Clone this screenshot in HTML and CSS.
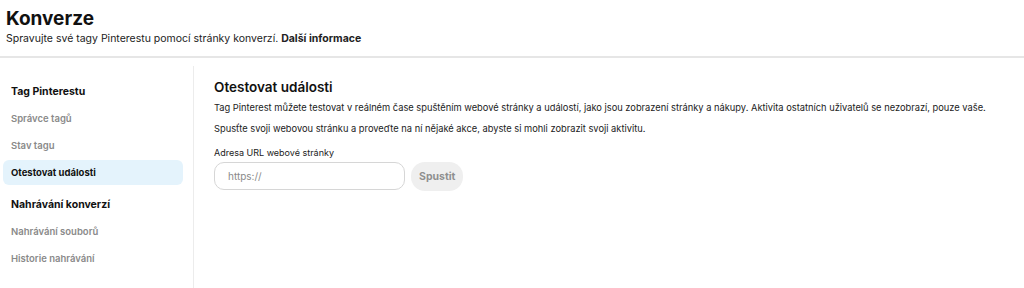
FILE: index.html
```html
<!DOCTYPE html>
<html>
<head>
    <meta charset="utf-8">
    <link rel="stylesheet" href="styles.css">
</head>
<body>
    <div class="page-header">
        <h1>Konverze</h1>
        <div class="subtitle">Spravujte své tagy Pinterestu pomocí stránky konverzí. <b>Další informace</b></div>
    </div>

    <div class="layout">
        <div class="sidebar">
            <div class="nav-group">Tag Pinterestu</div>
            <div class="nav-item">Správce tagů</div>
            <div class="nav-item">Stav tagu</div>
            <div class="nav-item active">Otestovat události</div>
            <div class="nav-group second">Nahrávání konverzí</div>
            <div class="nav-item">Nahrávání souborů</div>
            <div class="nav-item">Historie nahrávání</div>
        </div>

        <div class="content">
            <h2>Otestovat události</h2>
            <p>Tag Pinterest můžete testovat v reálném čase spuštěním webové stránky a událostí, jako jsou zobrazení stránky a nákupy. Aktivita ostatních uživatelů se nezobrazí, pouze vaše.</p>
            <p>Spusťte svoji webovou stránku a proveďte na ní nějaké akce, abyste si mohli zobrazit svoji aktivitu.</p>
            <label class="field-label">Adresa URL webové stránky</label>
            <div class="url-row">
                <input class="url-input" type="text" placeholder="https://">
                <button class="btn">Spustit</button>
            </div>
        </div>
    </div>
</body>
</html>
```

FILE: styles.css
```css
body {
    margin: 0;
    font-family: Inter, "Noto Sans", sans-serif;
    color: #111;
    background: #fff;
}

.page-header {
    padding: 8px 6px 9px;
    border-bottom: 2px solid #e6e6e6;
}

.page-header h1 {
    margin: 0;
    font-size: 19px;
    font-weight: 700;
    line-height: 22px;
}

.subtitle {
    font-size: 10.5px;
    line-height: 16px;
    margin-top: 1px;
    color: #222;
}

.subtitle b {
    font-weight: 700;
}

.layout {
    display: flex;
    margin-top: 8px;
    min-height: 222px;
}

.sidebar {
    width: 180px;
    padding: 13px 10px 0 3px;
    border-right: 1px solid #ececec;
    display: flex;
    flex-direction: column;
    gap: 2px;
}

.nav-group,
.nav-item {
    height: 25px;
    padding: 0 8px;
    display: flex;
    align-items: center;
    border-radius: 6px;
}

.nav-group {
    font-size: 10.5px;
    font-weight: 700;
}

.nav-group.second {
    margin-top: 5px;
}

.nav-item {
    font-size: 9.5px;
    font-weight: 600;
    color: #8a8a8a;
}

.nav-item.active {
    background: #e4f3fc;
    color: #111;
    font-weight: 700;
}

.content {
    padding: 12px 20px;
    flex: 1;
}

.content h2 {
    margin: 0 0 5px;
    font-size: 13.5px;
    font-weight: 600;
    line-height: 18px;
}

.content p {
    margin: 0 0 8px;
    font-size: 9.3px;
    line-height: 13px;
    color: #222;
}

.field-label {
    display: block;
    font-size: 9px;
    line-height: 13px;
    margin-top: 11px;
    margin-bottom: 3px;
    color: #222;
}

.url-row {
    display: flex;
    gap: 6px;
}

.url-input {
    width: 191px;
    height: 28px;
    box-sizing: border-box;
    border: 1px solid #d6d6d6;
    border-radius: 10px;
    padding: 0 13px;
    font-family: inherit;
    font-size: 10px;
    outline: none;
}

.url-input::placeholder {
    color: #8a8a8a;
}

.btn {
    height: 29px;
    padding: 0 8px;
    border: none;
    border-radius: 14px;
    background: #efefef;
    color: #8f8f8f;
    font-family: inherit;
    font-size: 10.5px;
    font-weight: 700;
}
```
